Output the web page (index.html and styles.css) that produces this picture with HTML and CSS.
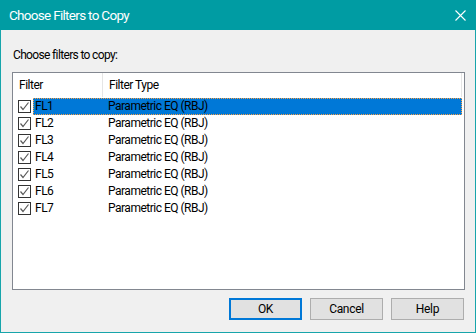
FILE: index.html
```html
<!DOCTYPE html>
<html lang="en">
  <head>
    <meta charset="UTF-8" />
    <title>Choose Filters to Copy</title>
    <link rel="stylesheet" href="styles.css">
  </head>
  <body>
    <div class="window">
      <div class="titlebar">
        <span class="title">Choose Filters to Copy</span>
        <svg class="close" width="11" height="11" viewBox="0 0 11 11">
          <path d="M0.5 0.5 L10.5 10.5 M10.5 0.5 L0.5 10.5" stroke="#fff" stroke-width="1.1" fill="none" />
        </svg>
      </div>

      <div class="content">
        <p class="prompt">Choose filters to copy:</p>

        <div class="list">
          <div class="list-head">
            <div class="col-name">Filter</div>
            <div class="col-type">Filter Type</div>
            <div class="col-rest"></div>
          </div>
          <div class="rows" id="rows"></div>
        </div>

        <div class="buttons">
          <button class="btn default">OK</button>
          <button class="btn">Cancel</button>
          <button class="btn">Help</button>
        </div>
      </div>
    </div>

    <script>
      // fill the filter list
      const rowsEl = document.getElementById("rows");
      const filters = ["FL1", "FL2", "FL3", "FL4", "FL5", "FL6", "FL7"];

      filters.forEach(function (name, i) {
        const row = document.createElement("div");
        row.className = i === 0 ? "row selected" : "row";
        row.innerHTML =
          '<span class="check"><svg width="11" height="11" viewBox="0 0 11 11">' +
          '<path d="M1.5 5.5 L4 8.5 L9.5 1.5" stroke="#5a5a5a" stroke-width="1.2" fill="none" /></svg></span>' +
          '<span class="cell name">' + name + '</span>' +
          '<span class="cell type">Parametric EQ (RBJ)</span>';
        rowsEl.appendChild(row);
      });
    </script>
  </body>
</html>
```

FILE: styles.css
```css
* {
  padding: 0;
  margin: 0;
  box-sizing: border-box;
}

body {
  font-family: "Segoe UI", Roboto, sans-serif;
  font-size: 12px;
  letter-spacing: -0.5px;
  color: #000;
  background: #f0f0f0;
}

.window {
  width: 476px;
  height: 333px;
  display: flex;
  flex-direction: column;
  border: solid 1px #17a5ab;
  border-top: none;
  background: #f0f0f0;
}

.titlebar {
  height: 30px;
  margin: 0 -1px;
  background: #009ca3;
  display: flex;
  align-items: center;
  justify-content: space-between;
  padding: 0 10px 1px 9px;
}

.title {
  color: #fff;
  font-size: 13.5px;
  letter-spacing: -0.7px;
}

.close {
  display: block;
  margin-top: 1px;
}

.content {
  flex: 1;
  display: flex;
  flex-direction: column;
  padding: 17px 10px 11px 11px;
}

.prompt {
  line-height: 16px;
  margin-bottom: 9px;
  padding-left: 1px;
  letter-spacing: -0.65px;
}

.list {
  height: 218px;
  border: solid 1px #828790;
  background: #fff;
  overflow: hidden;
}

.list-head {
  display: flex;
  height: 24px;
  align-items: stretch;
}

.list-head div {
  display: flex;
  align-items: center;
  padding-bottom: 1px;
}

.col-name {
  width: 90px;
  padding-left: 6px;
  border-right: solid 1px #e5e5e5;
}

.col-type {
  width: 358px;
  padding-left: 6px;
}

.col-rest {
  width: 2px;
  border-left: solid 1px #e5e5e5;
}

.rows {
  padding-top: 1px;
}

.row {
  display: flex;
  align-items: center;
  height: 17px;
  position: relative;
}

.check {
  width: 13px;
  height: 13px;
  margin-left: 5px;
  margin-right: 2px;
  border: solid 1px #333;
  background: #fff;
  display: flex;
  align-items: center;
  justify-content: center;
}

.check svg {
  display: block;
}

.cell {
  line-height: 17px;
  height: 17px;
}

.name {
  width: 75px;
  padding-left: 2px;
}

.type {
  flex: 1;
  margin-right: 2px;
}

.row.selected .name,
.row.selected .type {
  background: #0078d7;
}

.row.selected::after {
  content: "";
  position: absolute;
  left: 20px;
  right: 2px;
  top: 0;
  bottom: 0;
  border: dotted 1px #f7a046;
}

.buttons {
  display: flex;
  justify-content: flex-end;
  gap: 8px;
  margin-top: 8px;
  margin-right: 1px;
}

.btn {
  width: 73px;
  height: 22px;
  font-family: "Segoe UI", Roboto, sans-serif;
  font-size: 12px;
  letter-spacing: -0.3px;
  color: #000;
  background: #e1e1e1;
  border: solid 1px #adadad;
}

.btn.default {
  border: solid 2px #0078d7;
}
```
